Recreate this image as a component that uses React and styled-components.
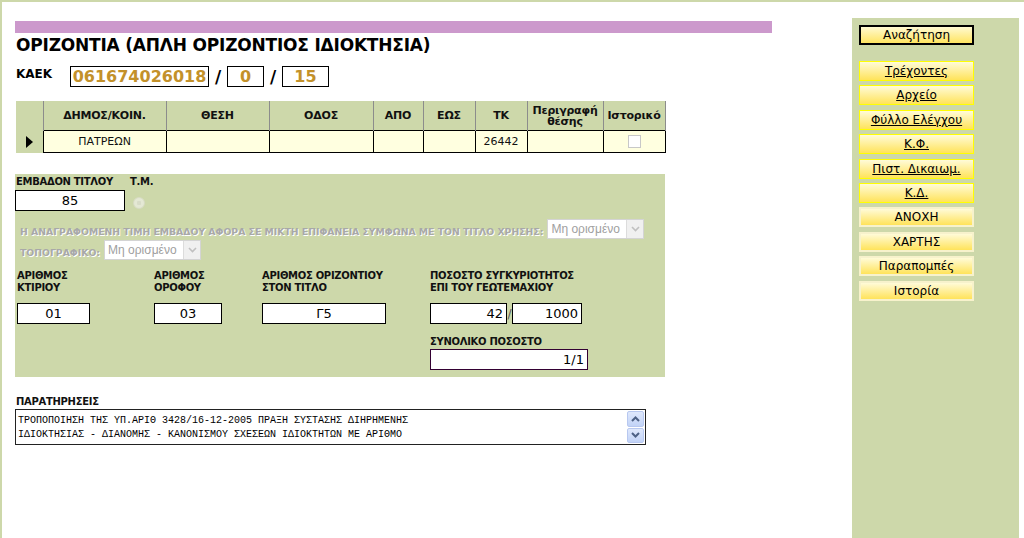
import React from 'react';
import styled, { createGlobalStyle } from 'styled-components';

const GREEN = '#CDD8AA';

const GlobalStyle = createGlobalStyle`
  html, body {
    margin: 0;
    padding: 0;
    background: #ffffff;
    font-family: "DejaVu Sans", Verdana, sans-serif;
  }
`;

const links = [
  { label: 'Τρέχοντες', link: true },
  { label: 'Αρχείο', link: true },
  { label: 'Φύλλο Ελέγχου', link: true },
  { label: 'Κ.Φ.', link: true },
  { label: 'Πιστ. Δικαιωμ.', link: true },
  { label: 'Κ.Δ.', link: true },
  { label: 'ΑΝΟΧΗ', link: false },
  { label: 'ΧΑΡΤΗΣ', link: false },
  { label: 'Παραπομπές', link: false },
  { label: 'Ιστορία', link: false },
];

const columns = [
  { title: 'ΔΗΜΟΣ/ΚΟΙΝ.', width: 123 },
  { title: 'ΘΕΣΗ', width: 103 },
  { title: 'ΟΔΟΣ', width: 104 },
  { title: 'ΑΠΟ', width: 50 },
  { title: 'ΕΩΣ', width: 52 },
  { title: 'ΤΚ', width: 52 },
  { title: 'Περιγραφή θέσης', width: 76 },
  { title: 'Ιστορικό', width: 62 },
];

const Chevron = ({ up, color, width }) => (
  <svg width="9" height="6" viewBox="0 0 9 6">
    <path
      d={up ? 'M1 5 L4.5 1.5 L8 5' : 'M1 1 L4.5 4.5 L8 1'}
      fill="none"
      stroke={color}
      strokeWidth={width}
    />
  </svg>
);

const Select = () => (
  <FakeSelect>
    <SelectText>Μη ορισμένο</SelectText>
    <SelectBtn>
      <Chevron color="#c0c0c0" width={1.6} />
    </SelectBtn>
  </FakeSelect>
);

const App = () => {
  return (
    <Page>
      <GlobalStyle />
      <Main>
        <PurpleBar />
        <Title>ΟΡΙΖΟΝΤΙΑ (ΑΠΛΗ ΟΡΙΖΟΝΤΙΟΣ ΙΔΙΟΚΤΗΣΙΑ)</Title>
        <KaekRow>
          <KaekLabel>ΚΑΕΚ</KaekLabel>
          <GoldBox $w={139}>061674026018</GoldBox>
          <Slash>/</Slash>
          <GoldBox $w={37}>0</GoldBox>
          <Slash>/</Slash>
          <GoldBox $w={47}>15</GoldBox>
        </KaekRow>

        <Grid>
          <colgroup>
            <col style={{ width: 27 }} />
            {columns.map(c => <col key={c.title} style={{ width: c.width }} />)}
          </colgroup>
          <thead>
            <tr>
              <HeadCell />
              {columns.map(c => <HeadCell key={c.title}>{c.title}</HeadCell>)}
            </tr>
          </thead>
          <tbody>
            <tr>
              <SelCell><Arrow /></SelCell>
              <DataCell>ΠΑΤΡΕΩΝ</DataCell>
              <DataCell />
              <DataCell />
              <DataCell />
              <DataCell />
              <DataCell>26442</DataCell>
              <DataCell />
              <DataCell><CheckBox /></DataCell>
            </tr>
          </tbody>
        </Grid>

        <Panel>
          <AreaLabels>
            <Label>ΕΜΒΑΔΟΝ ΤΙΤΛΟΥ</Label>
            <Label>Τ.Μ.</Label>
          </AreaLabels>
          <AreaRow>
            <Field $w={110}>85</Field>
            <Radio />
          </AreaRow>
          <GrayRow $top={8}>
            <GrayText>Η ΑΝΑΓΡΑΦΟΜΕΝΗ ΤΙΜΗ ΕΜΒΑΔΟΥ ΑΦΟΡΑ ΣΕ ΜΙΚΤΗ ΕΠΙΦΑΝΕΙΑ ΣΥΜΦΩΝΑ ΜΕ ΤΟΝ ΤΙΤΛΟ ΧΡΗΣΗΣ:</GrayText>
            <Select />
          </GrayRow>
          <GrayRow $top={1}>
            <GrayText>ΤΟΠΟΓΡΑΦΙΚΟ:</GrayText>
            <Select />
          </GrayRow>

          <NumGrid>
            <Label>ΑΡΙΘΜΟΣ<br />ΚΤΙΡΙΟΥ</Label>
            <Label>ΑΡΙΘΜΟΣ<br />ΟΡΟΦΟΥ</Label>
            <Label>ΑΡΙΘΜΟΣ ΟΡΙΖΟΝΤΙΟΥ<br />ΣΤΟΝ ΤΙΤΛΟ</Label>
            <Label>ΠΟΣΟΣΤΟ ΣΥΓΚΥΡΙΟΤΗΤΟΣ<br />ΕΠΙ ΤΟΥ ΓΕΩΤΕΜΑΧΙΟΥ</Label>
            <Field $w={73}>01</Field>
            <Field $w={68}>03</Field>
            <Field $w={124}>Γ5</Field>
            <Ratio>
              <Field $w={77} $align="right">42</Field>
              <RatioSlash>/</RatioSlash>
              <Field $w={70} $align="right">1000</Field>
            </Ratio>
            <Total>
              <Label>ΣΥΝΟΛΙΚΟ ΠΟΣΟΣΤΟ</Label>
              <Field $w={158} $align="right" $border="#330033">1/1</Field>
            </Total>
          </NumGrid>
        </Panel>

        <NotesLabel>ΠΑΡΑΤΗΡΗΣΕΙΣ</NotesLabel>
        <Notes>
          <NotesText>
            ΤΡΟΠΟΠΟΙΗΣΗ ΤΗΣ ΥΠ.ΑΡΙΘ 3428/16-12-2005 ΠΡΑΞΗ ΣΥΣΤΑΣΗΣ ΔΙΗΡΗΜΕΝΗΣ<br />
            ΙΔΙΟΚΤΗΣΙΑΣ - ΔΙΑΝΟΜΗΣ - ΚΑΝΟΝΙΣΜΟΥ ΣΧΕΣΕΩΝ ΙΔΙΟΚΤΗΤΩΝ ΜΕ ΑΡΙΘΜΟ
          </NotesText>
          <ScrollCol>
            <ScrollBtn><Chevron up color="#4d6185" width={2} /></ScrollBtn>
            <ScrollBtn><Chevron color="#4d6185" width={2} /></ScrollBtn>
          </ScrollCol>
        </Notes>
      </Main>

      <Sidebar>
        <SearchButton>Αναζήτηση</SearchButton>
        <NavList>
          {links.map(l => (
            <NavButton key={l.label} $link={l.link}>{l.label}</NavButton>
          ))}
        </NavList>
      </Sidebar>
    </Page>
  );
};

const Page = styled.div`
  display: flex;
  width: 1024px;
  height: 538px;
  box-sizing: border-box;
  border-top: 2px solid ${GREEN};
  border-left: 2px solid ${GREEN};
  overflow: hidden;
`;

const Main = styled.div`
  width: 850px;
  padding: 19px 0 0 13px;
  box-sizing: border-box;
  display: flex;
  flex-direction: column;
  align-items: flex-start;
`;

const PurpleBar = styled.div`
  width: 757px;
  height: 12px;
  background: #CC99CC;
`;

const Title = styled.h1`
  margin: 2px 0 0 1px;
  font-size: 17px;
  line-height: 20px;
  font-weight: bold;
  color: #000;
  letter-spacing: -0.2px;
`;

const KaekRow = styled.div`
  display: flex;
  align-items: center;
  margin: 11px 0 0 1px;
  height: 21px;
`;

const KaekLabel = styled.span`
  font-size: 12px;
  font-weight: bold;
  width: 54px;
  align-self: flex-start;
  margin-top: 1px;
`;

const GoldBox = styled.div`
  width: ${p => p.$w}px;
  height: 21px;
  box-sizing: border-box;
  border: 1px solid #000;
  color: #C3912A;
  font-size: 16px;
  font-weight: bold;
  text-align: center;
  line-height: 19px;
`;

const Slash = styled.span`
  font-size: 17px;
  font-weight: bold;
  width: 18px;
  text-align: center;
`;

const Grid = styled.table`
  margin: 14px 0 0 1px;
  border-collapse: collapse;
  table-layout: fixed;
  width: 649px;
  font-size: 11px;
`;

const HeadCell = styled.th`
  background: ${GREEN};
  height: 29px;
  padding: 0;
  border-right: 1px solid #8c8c8c;
  font-weight: bold;
  text-align: center;
  line-height: 11px;
  color: #111;
  letter-spacing: -0.2px;
`;

const SelCell = styled.td`
  background: ${GREEN};
  height: 22px;
  padding: 0;
  border-right: 1px solid #000;
  text-align: center;
`;

const Arrow = styled.span`
  display: inline-block;
  width: 0;
  height: 0;
  border-top: 6px solid transparent;
  border-bottom: 6px solid transparent;
  border-left: 7px solid #000;
  vertical-align: middle;
`;

const DataCell = styled.td`
  background: #FFFFE0;
  border: 1px solid #000;
  padding: 0;
  text-align: center;
  font-size: 11px;
  color: #111;
  height: 21px;
`;

const CheckBox = styled.span`
  display: inline-block;
  width: 11px;
  height: 11px;
  border: 1px solid #c8c8c8;
  background: #fff;
  vertical-align: middle;
`;

const Panel = styled.div`
  margin-top: 21px;
  width: 650px;
  height: 203px;
  background: ${GREEN};
  padding-top: 2px;
  box-sizing: border-box;
`;

const Label = styled.div`
  font-size: 10px;
  font-weight: bold;
  line-height: 12px;
  color: #111;
  letter-spacing: -0.3px;
`;

const AreaLabels = styled.div`
  display: flex;
  padding-left: 1px;
  & > div:first-child { width: 114px; }
`;

const AreaRow = styled.div`
  display: flex;
  align-items: center;
  margin-top: 2px;
`;

const Field = styled.div`
  width: ${p => p.$w}px;
  height: 21px;
  box-sizing: border-box;
  border: 1px solid ${p => p.$border || '#000'};
  background: #fff;
  font-size: 13px;
  line-height: 19px;
  text-align: ${p => p.$align || 'center'};
  padding: 0 3px;
  color: #000;
`;

const Radio = styled.span`
  width: 12px;
  height: 12px;
  margin-left: 8px;
  margin-top: 5px;
  border-radius: 50%;
  border: 1px solid #d8dcc4;
  background: radial-gradient(circle, #d8dcc8 0 2px, #e4e8d4 2.5px);
  box-sizing: border-box;
`;

const GrayRow = styled.div`
  display: flex;
  align-items: center;
  margin-top: ${p => p.$top}px;
  padding-left: 5px;
  gap: 4px;
`;

const GrayText = styled.span`
  font-size: 9.3px;
  font-weight: bold;
  color: #a8a8a8;
  text-shadow: 1px 1px 0 #ffffff;
  margin-top: 5px;
`;

const FakeSelect = styled.div`
  display: flex;
  width: 97px;
  height: 20px;
  box-sizing: border-box;
  border: 1px solid #d4d4d4;
  background: #fff;
`;

const SelectText = styled.span`
  flex: 1;
  font-family: "Liberation Sans", Arial, sans-serif;
  font-size: 12px;
  line-height: 18px;
  color: #a0a0a0;
  padding-left: 3px;
  white-space: nowrap;
  overflow: hidden;
`;

const SelectBtn = styled.span`
  width: 16px;
  display: flex;
  align-items: center;
  justify-content: center;
  background: #f0f0f0;
  border-left: 1px solid #dcdcdc;
`;

const NumGrid = styled.div`
  display: grid;
  grid-template-columns: 137px 108px 168px 1fr;
  row-gap: 9px;
  margin-top: 10px;
  padding-left: 2px;
`;

const Ratio = styled.div`
  display: flex;
  align-items: center;
`;

const RatioSlash = styled.span`
  font-size: 12px;
  color: #555;
  width: 5px;
  text-align: center;
`;

const Total = styled.div`
  grid-column: 4;
  display: flex;
  flex-direction: column;
  gap: 1px;
  margin-top: 3px;
`;

const NotesLabel = styled(Label)`
  margin: 19px 0 0 1px;
`;

const Notes = styled.div`
  display: flex;
  width: 631px;
  height: 36px;
  box-sizing: border-box;
  border: 1px solid #222;
  margin-top: 1px;
`;

const NotesText = styled.div`
  flex: 1;
  font-family: "Liberation Mono", "Courier New", monospace;
  font-size: 10px;
  line-height: 14px;
  padding: 4px 2px 0;
  color: #000;
  white-space: nowrap;
  overflow: hidden;
`;

const ScrollCol = styled.div`
  width: 17px;
  display: flex;
  flex-direction: column;
  padding: 1px;
  gap: 1px;
`;

const ScrollBtn = styled.div`
  flex: 1;
  display: flex;
  align-items: center;
  justify-content: center;
  border: 1px solid #b8c8f0;
  border-radius: 2px;
  background: linear-gradient(#dfe8fc, #c2d3f7);
`;

const Sidebar = styled.div`
  width: 167px;
  margin-top: 16px;
  background: ${GREEN};
  padding: 7px 0 0 7px;
  box-sizing: border-box;
  align-self: stretch;
`;

const ButtonBase = styled.div`
  width: 115px;
  height: 20px;
  box-sizing: border-box;
  background: linear-gradient(#fffbd8, #ffe35a);
  font-size: 12px;
  line-height: 18px;
  text-align: center;
  color: #000;
  cursor: pointer;
`;

const SearchButton = styled(ButtonBase)`
  border: 1px solid #000;
  outline: 1px solid #000;
  outline-offset: -2px;
`;

const NavList = styled.div`
  display: flex;
  flex-direction: column;
  gap: 4.4px;
  margin-top: 16px;
`;

const NavButton = styled(ButtonBase)`
  border: ${p => (p.$link ? '1px solid #ffff00' : '2px solid #f7f2cc')};
  line-height: ${p => (p.$link ? '18px' : '16px')};
  text-decoration: ${p => (p.$link ? 'underline' : 'none')};
`;

export default App;
